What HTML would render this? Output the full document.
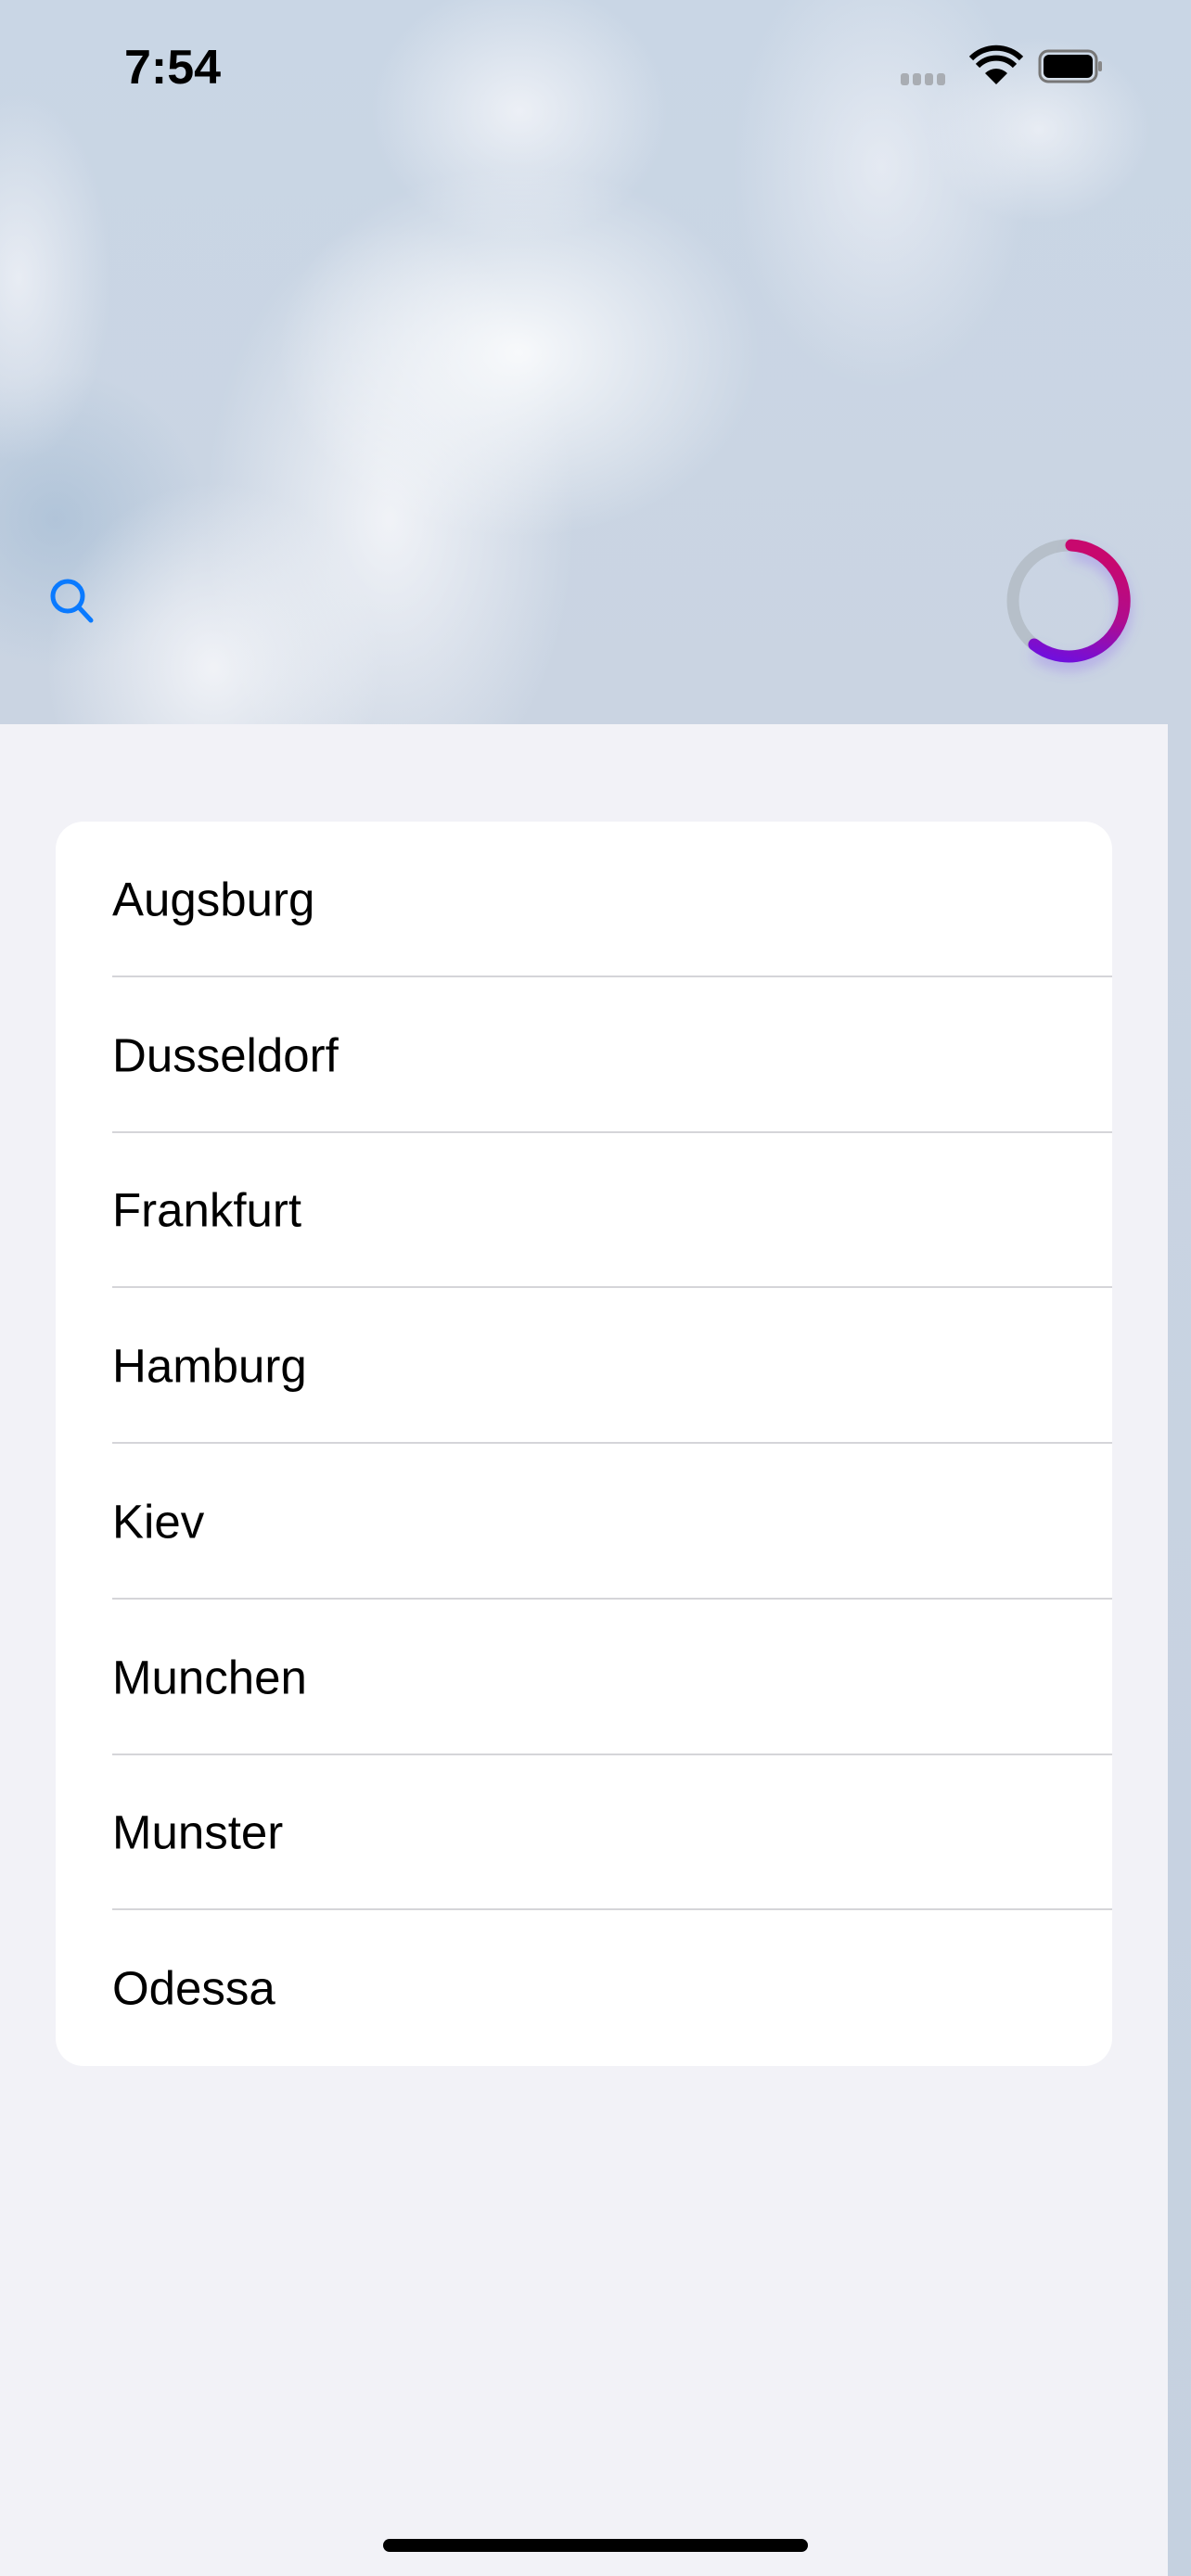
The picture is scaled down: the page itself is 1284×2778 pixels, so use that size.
<!DOCTYPE html>
<html><head><meta charset="utf-8"><style>
*{margin:0;padding:0;box-sizing:border-box}
body{width:1284px;height:2778px;position:relative;overflow:hidden;font-family:"Liberation Sans",sans-serif;background:#c7d3e2}
.sky{position:absolute;left:0;top:0;width:1284px;height:2778px;
background:
radial-gradient(ellipse 260px 200px at 560px 380px,rgba(255,255,255,.85),rgba(255,255,255,0)),
radial-gradient(ellipse 200px 320px at 420px 560px,rgba(250,250,252,.8),rgba(255,255,255,0)),
radial-gradient(ellipse 180px 200px at 230px 720px,rgba(250,250,252,.8),rgba(255,255,255,0)),
radial-gradient(ellipse 160px 140px at 560px 120px,rgba(245,246,250,.8),rgba(255,255,255,0)),
radial-gradient(ellipse 160px 240px at 950px 180px,rgba(240,242,248,.7),rgba(255,255,255,0)),
radial-gradient(ellipse 120px 100px at 1120px 140px,rgba(245,246,250,.7),rgba(255,255,255,0)),
radial-gradient(ellipse 100px 200px at 20px 300px,rgba(245,246,250,.7),rgba(255,255,255,0)),
radial-gradient(ellipse 160px 160px at 60px 560px,rgba(160,185,210,.6),rgba(160,185,210,0)),
linear-gradient(180deg,#c9d6e5 0%,#cad4e2 30%,#c5d1e0 100%)}
.main{position:absolute;left:0;top:781px;width:1259px;height:1997px;background:#f2f2f7}
.time{position:absolute;left:134px;top:43px;font-size:52px;font-weight:bold;color:#000}
.card{position:absolute;left:60px;top:886px;width:1139px;height:1342px;background:#fff;border-radius:30px;overflow:hidden}
.row{height:167.75px;position:relative}
.row span{position:absolute;left:61px;top:50%;transform:translateY(-50%);font-size:51px;color:#000}
.row:after{content:"";position:absolute;left:61px;right:0;bottom:0;height:2px;background:#d5d5d9}
.row:last-child:after{display:none}
.home{position:absolute;left:413px;top:2738px;width:458px;height:14px;border-radius:7px;background:#000}
</style></head><body>
<div class="sky"></div>
<div class="time">7:54</div>
<svg style="position:absolute;left:970px;top:48px" width="230" height="50" viewBox="0 0 230 50">
<g fill="#a9adb3"><rect x="1" y="31" width="9" height="13" rx="3"/><rect x="14" y="31" width="9" height="13" rx="3"/><rect x="27" y="31" width="9" height="13" rx="3"/><rect x="40" y="31" width="9" height="13" rx="3"/></g>
<path d="M104 43 L92 31 A17 17 0 0 1 116 31 Z" fill="#000"/>
<path d="M84 23 A28 28 0 0 1 124 23" stroke="#000" stroke-width="6" fill="none"/>
<path d="M77 15 A38 38 0 0 1 131 15" stroke="#000" stroke-width="6" fill="none"/>
<rect x="151" y="7" width="61" height="33" rx="9" fill="none" stroke="#777" stroke-width="3"/>
<rect x="155" y="11" width="53" height="25" rx="6" fill="#000"/>
<rect x="214" y="18" width="4" height="11" rx="2" fill="#888"/>
</svg>
<svg style="position:absolute;left:48px;top:618px" width="64" height="64" viewBox="0 0 64 64">
<circle cx="25" cy="25" r="16" stroke="#0a7aff" stroke-width="5" fill="none"/>
<path d="M37 37 L50 51" stroke="#0a7aff" stroke-width="5" stroke-linecap="round"/>
</svg>
<svg style="position:absolute;left:1060px;top:556px" width="184" height="184" viewBox="0 0 184 184">
<defs><linearGradient id="g" x1="0.2" y1="0" x2="0" y2="1"><stop offset="0" stop-color="#c8086e"/><stop offset="0.5" stop-color="#b00c8e"/><stop offset="1" stop-color="#6e0fe0"/></linearGradient>
<filter id="f" x="-50%" y="-50%" width="200%" height="200%"><feGaussianBlur stdDeviation="7"/></filter></defs>
<circle cx="92" cy="92" r="60" stroke="#b6bfc9" stroke-width="13" fill="none"/>
<path d="M95 32 A60 60 0 1 1 55 139" stroke="#8a5cf0" stroke-opacity=".35" stroke-width="14" fill="none" filter="url(#f)" transform="translate(0,8)"/>
<path d="M95 32 A60 60 0 1 1 55 139" stroke="url(#g)" stroke-width="13" fill="none" stroke-linecap="round"/>
</svg>
<div class="main"></div>
<div class="card">
<div class="row"><span>Augsburg</span></div>
<div class="row"><span>Dusseldorf</span></div>
<div class="row"><span>Frankfurt</span></div>
<div class="row"><span>Hamburg</span></div>
<div class="row"><span>Kiev</span></div>
<div class="row"><span>Munchen</span></div>
<div class="row"><span>Munster</span></div>
<div class="row"><span>Odessa</span></div>
</div>
<div class="home"></div>
</body></html>
